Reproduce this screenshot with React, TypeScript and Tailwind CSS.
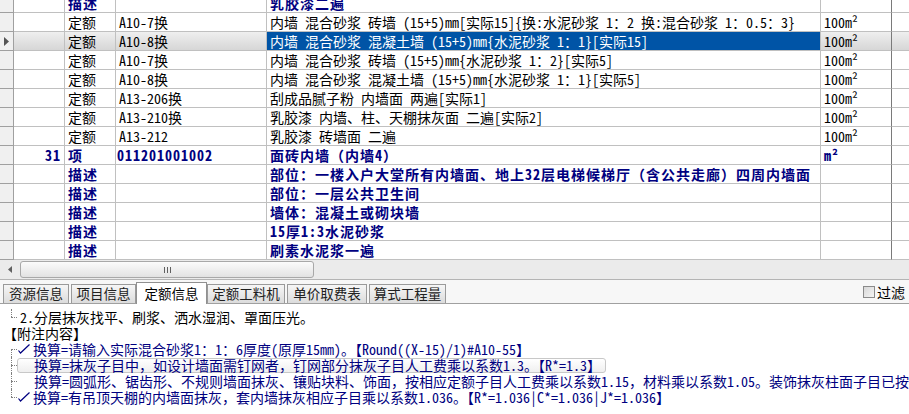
import React from "react";

type Row = {
	no?: string;
	kind: string;
	code?: string;
	name: string;
	unit?: string;
	bold?: boolean;
	selected?: boolean;
};

const rows: Row[] = [
	{ kind: "描述", name: "乳胶漆二遍", bold: true },
	{ kind: "定额", code: "A10-7换", name: "内墙 混合砂浆 砖墙 (15+5)mm[实际15]{换:水泥砂浆 1：2 换:混合砂浆 1：0.5：3}", unit: "100m²" },
	{ kind: "定额", code: "A10-8换", name: "内墙 混合砂浆 混凝土墙 (15+5)mm{水泥砂浆 1：1}[实际15]", unit: "100m²", selected: true },
	{ kind: "定额", code: "A10-7换", name: "内墙 混合砂浆 砖墙 (15+5)mm{水泥砂浆 1：2}[实际5]", unit: "100m²" },
	{ kind: "定额", code: "A10-8换", name: "内墙 混合砂浆 混凝土墙 (15+5)mm{水泥砂浆 1：1}[实际5]", unit: "100m²" },
	{ kind: "定额", code: "A13-206换", name: "刮成品腻子粉 内墙面 两遍[实际1]", unit: "100m²" },
	{ kind: "定额", code: "A13-210换", name: "乳胶漆 内墙、柱、天棚抹灰面 二遍[实际2]", unit: "100m²" },
	{ kind: "定额", code: "A13-212", name: "乳胶漆 砖墙面 二遍", unit: "100m²" },
	{ no: "31", kind: "项", code: "011201001002", name: "面砖内墙（内墙4）", unit: "m²", bold: true },
	{ kind: "描述", name: "部位：一楼入户大堂所有内墙面、地上32层电梯候梯厅（含公共走廊）四周内墙面", bold: true },
	{ kind: "描述", name: "部位：一层公共卫生间", bold: true },
	{ kind: "描述", name: "墙体：混凝土或砌块墙", bold: true },
	{ kind: "描述", name: "15厚1:3水泥砂浆", bold: true },
	{ kind: "描述", name: "刷素水泥浆一遍", bold: true },
];

const tabs = [
	{ label: "资源信息", w: "w-[66px]" },
	{ label: "项目信息", w: "w-[65px]" },
	{ label: "定额信息", w: "w-[71px]", active: true },
	{ label: "定额工料机", w: "w-[78px]" },
	{ label: "单价取费表", w: "w-[80px]" },
	{ label: "算式工程量", w: "w-[77px]" },
];

// half-width latin + full-width CJK, like the old song-style UI font
const mono = { fontFamily: '"Noto Sans Mono CJK SC", "Noto Sans CJK SC", monospace' };

const Check = () => (
	<svg width="14" height="12" viewBox="0 0 14 12" className="shrink-0">
		<path d="M1.5 7.5 L3.5 10 L12.5 1.5" stroke="#000080" strokeWidth="1.2" fill="none" />
	</svg>
);

const Gutter = ({ up, down }: { up?: boolean; down?: boolean }) => (
	<div className="relative w-[17px] h-[16px] shrink-0">
		{up && <div className="absolute left-[11px] top-0 h-[8px] border-l border-dotted border-[#808080]" />}
		{down && <div className="absolute left-[11px] top-[8px] h-[8px] border-l border-dotted border-[#808080]" />}
		<div className="absolute left-[11px] top-[8px] w-[6px] border-t border-dotted border-[#808080]" />
	</div>
);

export default function App() {
	return (
		<div
			className="w-[909px] h-[414px] overflow-hidden bg-white text-black"
			style={{ fontFamily: '"Noto Sans CJK SC", "Liberation Sans", sans-serif' }}
		>
			{/* grid */}
			<div className="h-[260px] overflow-hidden" style={mono}>
				<div className="-mt-[6px]">
					{rows.map((r, i) => {
						const txt = r.bold ? "text-[#000080] font-bold tracking-[1px]" : "text-black";
						const cell = "border-r border-b border-[#c0c0c0] h-[19px] whitespace-nowrap overflow-hidden text-[14px] leading-[18px]";
						return (
							<div
								key={i}
								className={`grid grid-cols-[14px_51px_51px_151px_554px_71px_1fr] ${r.selected ? "bg-gradient-to-b from-[#efefef] to-[#d5d5d5]" : ""}`}
							>
								<div className="border-r border-b border-[#a0a0a0] h-[19px] bg-[#f0f0f0] flex items-center justify-center">
									{r.selected && (
										<svg width="5" height="9" viewBox="0 0 5 9">
											<path d="M0 0 L5 4.5 L0 9 Z" fill="#555" />
										</svg>
									)}
								</div>
								<div className={`${cell} ${txt} text-right pr-[3px]`}>{r.no}</div>
								<div className={`${cell} ${txt} pl-[3px]`}>{r.kind}</div>
								<div className={`${cell} ${txt} ${r.bold ? "pl-[1px]" : "pl-[3px]"}`}>{r.code}</div>
								<div className={`${cell} pl-[3px] ${r.selected ? "bg-[#0054a6] text-white" : txt}`}>{r.name}</div>
								<div className={`${cell} ${txt} pl-[3px] border-r-[#7a7a7a]`}>{r.unit}</div>
								<div className="border-b border-[#c0c0c0] h-[19px]" />
							</div>
						);
					})}
				</div>
			</div>

			{/* horizontal scrollbar */}
			<div className="h-[20px] bg-[#ebebeb] border-b border-[#b4b4b4] flex items-center">
				<div className="w-[20px] flex justify-center">
					<svg width="4" height="7" viewBox="0 0 4 7">
						<path d="M4 0 L0 3.5 L4 7 Z" fill="#606060" />
					</svg>
				</div>
				<div className="w-[294px] h-[17px] rounded-[3px] border border-[#a8a8a8] bg-gradient-to-b from-[#fbfbfb] to-[#e2e2e2] flex items-center justify-center gap-[2px]">
					<div className="w-px h-[6px] bg-[#606060]" />
					<div className="w-px h-[6px] bg-[#606060]" />
					<div className="w-px h-[6px] bg-[#606060]" />
				</div>
			</div>

			{/* tabs */}
			<div className="h-[24px] bg-[#f7f7f7] border-b border-[#a0a0a0] flex items-end pl-[3px] relative">
				<div className="flex items-end gap-[2px]">
					{tabs.map((t) =>
						t.active ? (
							<div
								key={t.label}
								className={`${t.w} -mx-[2px] h-[22px] -mb-px bg-white border border-b-0 border-[#909090] flex items-center justify-center text-[13.5px] leading-none relative z-10`}
							>
								{t.label}
							</div>
						) : (
							<div
								key={t.label}
								className={`${t.w} h-[19px] bg-gradient-to-b from-[#f6f6f6] to-[#dcdcdc] border border-b-0 border-[#9a9a9a] flex items-center justify-center text-[13.5px] leading-none text-[#202020]`}
							>
								{t.label}
							</div>
						)
					)}
				</div>
				<div className="ml-auto mr-[4px] mb-[4px] flex items-center gap-[2px]">
					<div className="w-[12px] h-[12px] border border-[#8a8a8a] bg-gradient-to-br from-[#d8d8d8] to-[#f4f4f4]" />
					<span className="text-[14px] leading-none">过滤</span>
				</div>
			</div>

			{/* content */}
			<div className="pt-[5px] text-[14px] leading-[16px] whitespace-nowrap" style={mono}>
				<div className="flex items-center h-[16px]">
					<Gutter up />
					<span className="ml-[3px]">2.分层抹灰找平、刷浆、洒水湿润、罩面压光。</span>
				</div>
				<div className="flex items-center h-[16px] pl-[3px]">【附注内容】</div>
				<div className="flex items-center h-[16px] text-[#000080]">
					<Gutter down />
					<Check />
					<span className="ml-[2px]">换算=请输入实际混合砂浆1：1：6厚度(原厚15mm)。【Round((X-15)/1)#A10-55】</span>
				</div>
				<div className="flex items-center h-[16px] text-[#000080]">
					<Gutter up down />
					<div className="h-[15px] rounded-[3px] border border-[#c8c8c8] bg-gradient-to-b from-white to-[#efefef] flex items-center pl-[16px] pr-[4px]">
						换算=抹灰子目中，如设计墙面需钉网者，钉网部分抹灰子目人工费乘以系数1.3。【R*=1.3】
					</div>
				</div>
				<div className="flex items-center h-[16px] text-[#000080]">
					<Gutter up down />
					<span className="ml-[17px]">换算=圆弧形、锯齿形、不规则墙面抹灰、镶贴块料、饰面，按相应定额子目人工费乘以系数1.15，材料乘以系数1.05。装饰抹灰柱面子目已按</span>
				</div>
				<div className="flex items-center h-[16px] text-[#000080]">
					<Gutter up />
					<Check />
					<span className="ml-[2px]">换算=有吊顶天棚的内墙面抹灰，套内墙抹灰相应子目乘以系数1.036。【R*=1.036|C*=1.036|J*=1.036】</span>
				</div>
			</div>
		</div>
	);
}
